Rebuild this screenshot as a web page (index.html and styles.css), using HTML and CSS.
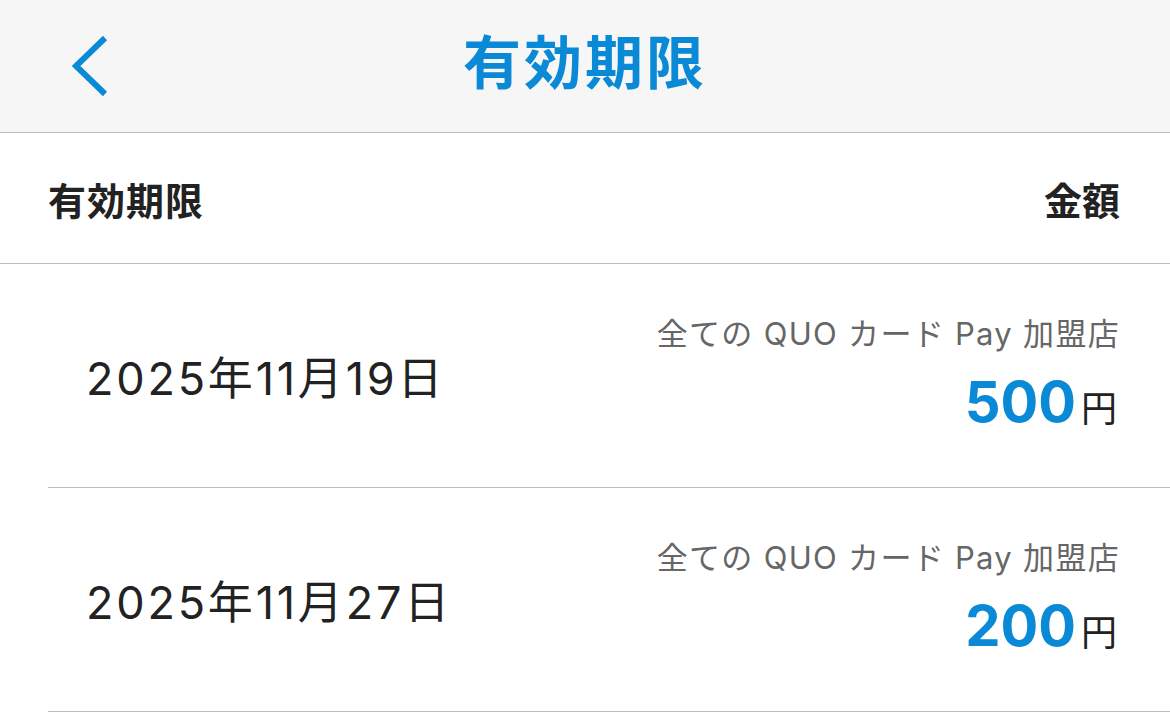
FILE: index.html
```html
<!DOCTYPE html>
<html lang="ja">
<head>
    <meta charset="UTF-8">
    <meta name="viewport" content="width=device-width, initial-scale=1.0">
    <title>有効期限</title>
    <link rel="stylesheet" href="styles.css">
</head>
<body>

    <header class="nav-bar">
        <button class="back-btn" aria-label="戻る">
            <svg width="40" height="62" viewBox="0 0 40 62">
                <polyline points="33,3 4,31 33,59" fill="none" stroke="#0a8ad6" stroke-width="6"/>
            </svg>
        </button>
        <h1>有効期限</h1>
        <div></div>
    </header>

    <div class="list-head">
        <span>有効期限</span>
        <span>金額</span>
    </div>

    <!-- expiry rows -->
    <div class="expiry-row">
        <div class="expiry-date">2025年11月19日</div>
        <div class="expiry-amount">
            <div class="shop">全ての QUO カード Pay 加盟店</div>
            <div class="price"><span class="num">500</span><span class="yen">円</span></div>
        </div>
    </div>

    <div class="expiry-row">
        <div class="expiry-date">2025年11月27日</div>
        <div class="expiry-amount">
            <div class="shop">全ての QUO カード Pay 加盟店</div>
            <div class="price"><span class="num">200</span><span class="yen">円</span></div>
        </div>
    </div>

</body>
</html>
```

FILE: styles.css
```css
body {
    margin: 0;
    font-family: Inter, "Noto Sans CJK JP", sans-serif;
    background-color: #fff;
    color: #222;
}

.nav-bar {
    display: grid;
    grid-template-columns: 1fr auto 1fr;
    align-items: center;
    height: 132px;
    background-color: #f6f6f6;
    border-bottom: 1px solid #bdbdbd;
}

.nav-bar h1 {
    margin: 0;
    padding-bottom: 14px;
    font-family: "Noto Sans CJK JP", sans-serif;
    font-size: 58px;
    font-weight: 700;
    color: #0a8ad6;
    letter-spacing: 3px;
}

.back-btn {
    justify-self: start;
    margin-left: 72px;
    padding: 0;
    border: none;
    background: none;
    display: flex;
}

.list-head {
    display: flex;
    justify-content: space-between;
    align-items: center;
    height: 130px;
    padding: 0 50px 0 48px;
    border-bottom: 1px solid #bdbdbd;
    font-family: "Noto Sans CJK JP", sans-serif;
    font-size: 38px;
    font-weight: 700;
    color: #222;
}

.list-head span:first-child {
    letter-spacing: 1px;
}

.expiry-row {
    display: flex;
    justify-content: space-between;
    align-items: center;
    height: 223px;
    margin-left: 48px;
    padding: 0 50px 0 38px;
    border-bottom: 1px solid #bdbdbd;
}

.expiry-date {
    font-size: 45px;
    letter-spacing: 2.8px;
    color: #222;
}

.expiry-amount {
    margin-bottom: 6px;
    text-align: right;
}

.expiry-amount .shop {
    font-size: 31px;
    letter-spacing: 1.3px;
    color: #666;
}

.expiry-amount .price {
    margin-top: 14px;
    padding-right: 3px;
}

.price .num {
    font-size: 56px;
    font-weight: 700;
    color: #0a8ad6;
}

.price .yen {
    margin-left: 5px;
    font-size: 36px;
    color: #222;
}
```
